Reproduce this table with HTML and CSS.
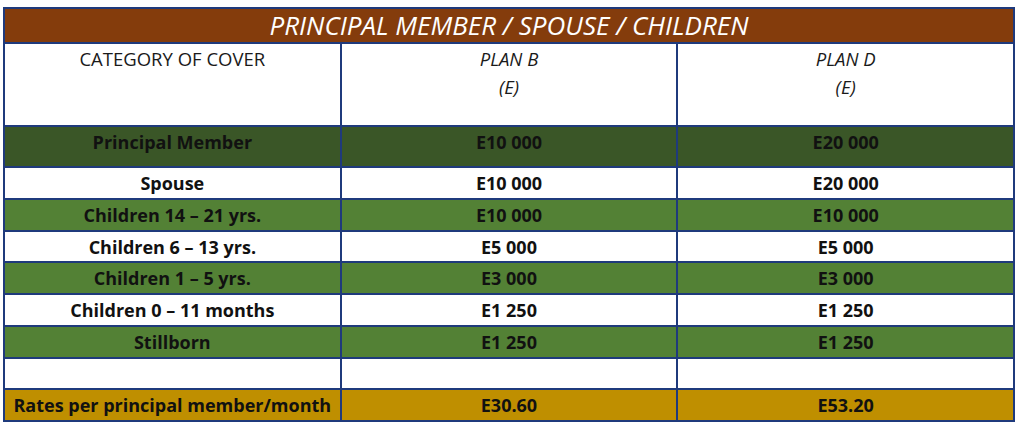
FILE: index.html
```html
<!DOCTYPE html>
<html>
<head>
<meta charset="utf-8">
<link rel="stylesheet" href="styles.css">
</head>
<body>
<div class="wrap">
<table class="cover">
  <colgroup><col class="c"><col class="c"><col class="c"></colgroup>
  <tr class="title"><td colspan="3">PRINCIPAL MEMBER / SPOUSE / CHILDREN</td></tr>
  <tr class="head">
    <td>CATEGORY OF COVER</td>
    <td class="it">PLAN B<br>(E)</td>
    <td class="it">PLAN D<br>(E)</td>
  </tr>
  <tr class="dark tall"><td>Principal Member</td><td>E10 000</td><td>E20 000</td></tr>
  <tr class="white"><td>Spouse</td><td>E10 000</td><td>E20 000</td></tr>
  <tr class="green"><td>Children 14 – 21 yrs.</td><td>E10 000</td><td>E10 000</td></tr>
  <tr class="white short"><td>Children 6 – 13 yrs.</td><td>E5 000</td><td>E5 000</td></tr>
  <tr class="green"><td>Children 1 – 5 yrs.</td><td>E3 000</td><td>E3 000</td></tr>
  <tr class="white"><td>Children 0 – 11 months</td><td>E1 250</td><td>E1 250</td></tr>
  <tr class="green"><td>Stillborn</td><td>E1 250</td><td>E1 250</td></tr>
  <tr class="white short"><td></td><td></td><td></td></tr>
  <tr class="gold"><td>Rates per principal member/month</td><td>E30.60</td><td>E53.20</td></tr>
</table>
</div>
</body>
</html>
```
FILE: styles.css
```css
html, body {
  margin: 0;
  padding: 0;
  background: #ffffff;
}
.wrap {
  padding: 7px 0 0 3px;
}
.cover {
  width: 1012px;
  border-collapse: collapse;
  table-layout: fixed;
  font-family: "Open Sans", "Noto Sans", sans-serif;
}
.cover td {
  border: 2px solid #1f3a7c;
  padding: 1px 0 0 0;
  text-align: center;
  vertical-align: top;
  color: #111;
  font-weight: 700;
  font-size: 18px;
  line-height: 29px;
  height: 29px;
  white-space: nowrap;
}
.cover .short td {
  height: 28px;
  line-height: 28px;
}
.cover .title td {
  padding: 0;
  background: #843c0c;
  color: #ffffff;
  font-style: italic;
  font-weight: 400;
  font-size: 26px;
  line-height: 33px;
  height: 33px;
}
.cover .head td {
  font-weight: 400;
  font-size: 18.5px;
  line-height: 28px;
  height: 80px;
  padding-top: 1px;
  color: #1a1a1a;
}
.cover .head td.it {
  font-style: italic;
}
.cover .tall td {
  height: 38px;
  line-height: 28px;
}
.cover .gold td {
  height: 29px;
  line-height: 29px;
}
.dark td { background: #3a5627; }
.green td { background: #538135; }
.white td { background: #ffffff; }
.gold td { background: #bf8f00; }
```
